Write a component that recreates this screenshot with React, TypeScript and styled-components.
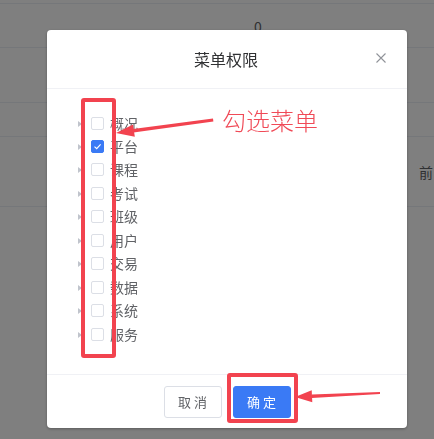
import React from "react";
import styled, { createGlobalStyle } from "styled-components";

const menus = ["概况", "平台", "课程", "考试", "班级", "用户", "交易", "数据", "系统", "服务"];
const checkedMenus = ["平台"];

const GlobalStyle = createGlobalStyle`
	html, body {
		margin: 0;
		padding: 0;
		background: #ffffff;
		font-family: "Noto Sans CJK SC", "Noto Sans", sans-serif;
	}
`;

type CellProps = {
	height: number;
};

type CheckboxProps = {
	checked?: boolean;
};

type ButtonProps = {
	primary?: boolean;
};

type MarkProps = {
	left: number;
	top: number;
	width: number;
	height: number;
};

export default function App() {
	return (
		<>
			<GlobalStyle />
			<StyledPage>
				<StyledTableRow height={4} />
				<StyledTableRow height={44}>
					<StyledCell left={254}>0</StyledCell>
				</StyledTableRow>
				<StyledTableRow height={55} />
				<StyledTableRow height={34} />
				<StyledTableRow height={70}>
					<StyledCell left={419}>前</StyledCell>
				</StyledTableRow>
			</StyledPage>
			<StyledMask />
			<StyledDialog>
				<StyledDialogHeader>
					<StyledDialogTitle>菜单权限</StyledDialogTitle>
					<StyledClose>
						<svg width="10" height="10" viewBox="0 0 10 10">
							<path
								d="M0.5 0.5 L9.5 9.5 M9.5 0.5 L0.5 9.5"
								stroke="#909399"
								strokeWidth="1.1"
							/>
						</svg>
					</StyledClose>
				</StyledDialogHeader>
				<StyledDialogBody>
					{menus.map((item) => {
						const checked = checkedMenus.includes(item);
						return (
							<StyledTreeNode key={item}>
								<StyledExpandIcon />
								<StyledCheckbox checked={checked}>
									{checked && (
										<svg width="9" height="9" viewBox="0 0 9 9">
											<path
												d="M1.5 4.6 L3.7 6.6 L7.6 2.4"
												fill="none"
												stroke="#ffffff"
												strokeWidth="1.2"
											/>
										</svg>
									)}
								</StyledCheckbox>
								<StyledNodeLabel>{item}</StyledNodeLabel>
							</StyledTreeNode>
						);
					})}
				</StyledDialogBody>
				<StyledDialogFooter>
					<StyledButton>取 消</StyledButton>
					<StyledButton primary>确 定</StyledButton>
				</StyledDialogFooter>
			</StyledDialog>

			<StyledMarkBox left={81} top={98} width={35} height={260} />
			<StyledMarkBox left={227} top={373} width={71} height={50} />
			<StyledNote>勾选菜单</StyledNote>
			<StyledArrows width="434" height="439" viewBox="0 0 434 439">
				<polygon points="213,118.6 213.4,121.4 133.5,132.4 133,129" fill="#f2434f" />
				<polygon points="116,133 133,124.4 134.8,136.8" fill="#f2434f" />
				<polygon points="380,391.9 380,394.1 311.9,398 311.8,394.4" fill="#f2434f" />
				<polygon points="295,397 311.7,390.2 312.3,402.2" fill="#f2434f" />
			</StyledArrows>
		</>
	);
}

const StyledPage = styled.div`
	width: 434px;
	height: 439px;
	overflow: hidden;
	background: #ffffff;
`;

const StyledTableRow = styled.div<CellProps>`
	position: relative;
	height: ${(props) => props.height}px;
	border-bottom: 1px solid #ebeef5;
	box-sizing: border-box;
`;

const StyledCell = styled.span<{ left: number }>`
	position: absolute;
	left: ${(props) => props.left}px;
	top: 50%;
	transform: translateY(-50%);
	font-size: 14px;
	color: #606266;
	white-space: nowrap;
`;

const StyledMask = styled.div`
	position: fixed;
	inset: 0;
	background: rgba(0, 0, 0, 0.5);
`;

const StyledDialog = styled.div`
	position: fixed;
	top: 30px;
	left: 47px;
	width: 360px;
	background: #ffffff;
	border-radius: 4px;
	box-shadow: 0 1px 3px rgba(0, 0, 0, 0.3);
	display: flex;
	flex-direction: column;
`;

const StyledDialogHeader = styled.div`
	position: relative;
	height: 59px;
	box-sizing: border-box;
	border-bottom: 1px solid #f0f1f5;
	display: flex;
	align-items: center;
	justify-content: center;
`;

const StyledDialogTitle = styled.span`
	font-size: 16px;
	color: #303133;
	line-height: 24px;
	margin-left: -2px;
`;

const StyledClose = styled.span`
	position: absolute;
	right: 21px;
	top: 23px;
	display: flex;
	width: 10px;
	height: 10px;
`;

const StyledDialogBody = styled.div`
	height: 285px;
	box-sizing: border-box;
	padding: 22.4px 0 0 31px;
	display: flex;
	flex-direction: column;
`;

const StyledTreeNode = styled.div`
	height: 23.44px;
	display: flex;
	align-items: center;
`;

const StyledExpandIcon = styled.span`
	width: 0;
	height: 0;
	border-top: 3.5px solid transparent;
	border-bottom: 3.5px solid transparent;
	border-left: 4px solid #c0c4cc;
	margin-top: 1px;
	margin-right: 9px;
`;

const StyledCheckbox = styled.span<CheckboxProps>`
	width: 13px;
	height: 13px;
	box-sizing: border-box;
	border: 1px solid ${(props) => (props.checked ? "#3a7af5" : "#dcdfe6")};
	background: ${(props) => (props.checked ? "#3a7af5" : "#ffffff")};
	border-radius: 2px;
	display: flex;
	align-items: center;
	justify-content: center;
	margin-right: 6px;
`;

const StyledNodeLabel = styled.span`
	font-size: 14px;
	color: #606266;
	line-height: 18px;
	margin-top: -1px;
`;

const StyledDialogFooter = styled.div`
	height: 54px;
	box-sizing: border-box;
	border-top: 1px solid #f0f1f5;
	display: flex;
	align-items: center;
	justify-content: center;
	gap: 11px;
`;

const StyledButton = styled.button<ButtonProps>`
	height: 32px;
	width: 58px;
	padding: 0;
	border-radius: 3px;
	border: 1px solid ${(props) => (props.primary ? "#3a7af5" : "#dcdfe6")};
	background: ${(props) => (props.primary ? "#3a7af5" : "#ffffff")};
	color: ${(props) => (props.primary ? "#ffffff" : "#606266")};
	font-family: "Noto Sans CJK SC", sans-serif;
	font-size: 13px;
	line-height: 30px;
	cursor: pointer;
`;

const StyledMarkBox = styled.div<MarkProps>`
	position: fixed;
	left: ${(props) => props.left}px;
	top: ${(props) => props.top}px;
	width: ${(props) => props.width}px;
	height: ${(props) => props.height}px;
	box-sizing: border-box;
	border: 4px solid #f2434f;
	border-radius: 3px;
	pointer-events: none;
`;

const StyledNote = styled.span`
	position: fixed;
	left: 222px;
	top: 104px;
	font-size: 24px;
	font-weight: 300;
	line-height: 32px;
	color: #f04a57;
	white-space: nowrap;
`;

const StyledArrows = styled.svg`
	position: fixed;
	left: 0;
	top: 0;
	pointer-events: none;
`;
